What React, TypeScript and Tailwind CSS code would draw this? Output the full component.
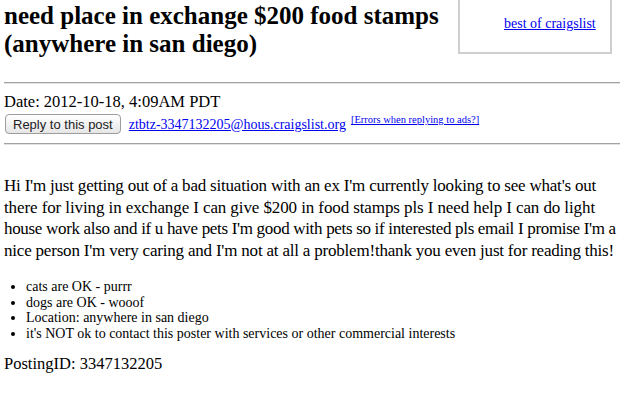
import React from 'react';

const serif = 'font-["Liberation_Serif","Times_New_Roman",serif]';

function Rule() {
  return <div className="h-[2px] border-t border-[#a3a3a3] border-b border-b-[#e2e2e2] ml-[4px]" />;
}

export default function App() {
  return (
    <div className={`${serif} w-[620px] h-[400px] bg-white text-black overflow-hidden`}>
      {/* Title + best-of box */}
      <div className="flex items-start">
        <h2 className="flex-1 pl-[4px] pt-[2px] text-[25px] leading-[28px] font-bold">
          need place in exchange $200 food stamps (anywhere in san diego)
        </h2>
        <div className="w-[154px] h-[54px] mr-[8px] border-x-2 border-b-2 border-[#cfcfcf] pl-[44px] pt-[11px]">
          <a href="#" className="text-[14px] text-[#0000ee] underline">best of craigslist</a>
        </div>
      </div>

      <div className="mt-[24px]">
        <Rule />
      </div>

      {/* Date + reply */}
      <div className="pl-[4px] pt-[8px] text-[16.5px] leading-[20px]">Date: 2012-10-18, 4:09AM PDT</div>
      <div className="flex items-center pl-[5px] mt-[2px] h-[20px]">
        <button className='font-["Liberation_Sans",Arial,sans-serif] text-[13px] h-[20px] px-[7px] rounded-[4px] border border-[#9d9d9d] bg-gradient-to-b from-white to-[#e6e6e6] text-[#222]'>
          Reply to this post
        </button>
        <a href="#" className="ml-[8px] text-[14px] text-[#0000ee] underline">ztbtz-3347132205@hous.craigslist.org</a>
        <a href="#" className="ml-[5px] self-start -mt-[2px] text-[10.5px] text-[#0000ee] underline">[Errors when replying to ads?]</a>
      </div>

      <div className="mt-[9px]">
        <Rule />
      </div>

      {/* Body, broken the way the posting wraps */}
      <div className="pl-[4px] mt-[30px] text-[17px] leading-[21.7px] whitespace-nowrap">
        <div className="tracking-[-0.2px]">Hi I'm just getting out of a bad situation with an ex I'm currently looking to see what's out</div>
        <div className="tracking-[-0.1px]">there for living in exchange I can give $200 in food stamps pls I need help I can do light</div>
        <div className="tracking-[-0.32px]">house work also and if u have pets I'm good with pets so if interested pls email I promise I'm a</div>
        <div className="tracking-[-0.2px]">nice person I'm very caring and I'm not at all a problem!thank you even just for reading this!</div>
      </div>

      <ul className="mt-[17px] pl-[26px] list-disc text-[14px] leading-[15.7px]">
        <li>cats are OK - purrr</li>
        <li>dogs are OK - wooof</li>
        <li>Location: anywhere in san diego</li>
        <li>it's NOT ok to contact this poster with services or other commercial interests</li>
      </ul>

      <div className="pl-[4px] mt-[12px] text-[16.5px] leading-[20px]">PostingID: 3347132205</div>
    </div>
  );
}
